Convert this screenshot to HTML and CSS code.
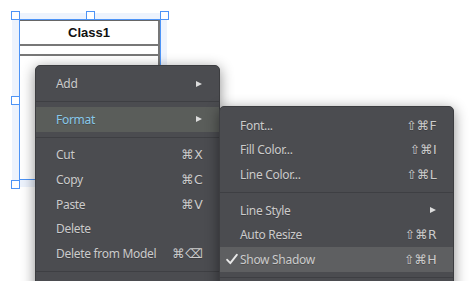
FILE: index.html
```html
<!DOCTYPE html>
<html lang="en">
<head>
    <meta charset="UTF-8">
    <title>Class Diagram - Context Menu</title>
    <link rel="stylesheet" href="styles.css">
</head>
<body>
    <div class="canvas">
        <div class="glow"></div>
        <div class="node">
            <div class="node-title">Class1</div>
            <div class="node-attrs"></div>
            <div class="node-ops"></div>
        </div>
        <div class="selection"></div>
        <span class="handle h-tl"></span>
        <span class="handle h-tc"></span>
        <span class="handle h-tr"></span>
        <span class="handle h-ml"></span>
        <span class="handle h-bl"></span>

        <div class="menu menu-main">
            <div class="item"><span class="mark"></span><span class="label">Add</span><span class="arrow"></span></div>
            <div class="sep"></div>
            <div class="item active"><span class="mark"></span><span class="label">Format</span><span class="arrow"></span></div>
            <div class="sep"></div>
            <div class="item"><span class="mark"></span><span class="label">Cut</span><span class="key">⌘X</span></div>
            <div class="item"><span class="mark"></span><span class="label">Copy</span><span class="key">⌘C</span></div>
            <div class="item"><span class="mark"></span><span class="label">Paste</span><span class="key">⌘V</span></div>
            <div class="item"><span class="mark"></span><span class="label">Delete</span></div>
            <div class="item"><span class="mark"></span><span class="label">Delete from Model</span><span class="key">⌘⌫</span></div>
            <div class="sep"></div>
        </div>

        <div class="menu menu-sub">
            <div class="item"><span class="mark"></span><span class="label">Font...</span><span class="key">⇧⌘F</span></div>
            <div class="item"><span class="mark"></span><span class="label">Fill Color...</span><span class="key">⇧⌘I</span></div>
            <div class="item"><span class="mark"></span><span class="label">Line Color...</span><span class="key">⇧⌘L</span></div>
            <div class="sep"></div>
            <div class="item"><span class="mark"></span><span class="label">Line Style</span><span class="arrow"></span></div>
            <div class="item"><span class="mark"></span><span class="label">Auto Resize</span><span class="key">⇧⌘R</span></div>
            <div class="item checked">
                <span class="mark">
                    <svg width="12" height="12" viewBox="0 0 12 12"><polyline points="1.2,6.8 4.3,10.2 10.8,1.8" fill="none" stroke="#e8e8e8" stroke-width="1.9" stroke-linecap="round" stroke-linejoin="round"/></svg>
                </span>
                <span class="label">Show Shadow</span><span class="key">⇧⌘H</span>
            </div>
            <div class="sep"></div>
        </div>
    </div>
</body>
</html>
```

FILE: styles.css
```css
body {
    margin: 0;
    background: #fff;
    font-family: 'Noto Sans', 'DejaVu Sans', sans-serif;
    overflow: hidden;
}
.canvas {
    position: relative;
    width: 469px;
    height: 281px;
    overflow: hidden;
    background: #fff;
}
.glow {
    position: absolute;
    left: 12px;
    top: 13px;
    width: 155px;
    height: 174px;
    background: rgba(214, 229, 250, 0.45);
}
.node {
    position: absolute;
    left: 20px;
    top: 20px;
    width: 138px;
    height: 158px;
    background: #fff;
    border-top: 1px solid #666;
    border-right: 2px solid #777;
    border-bottom: 1px solid #888;
    display: flex;
    flex-direction: column;
}
.node-title {
    height: 23px;
    display: flex;
    align-items: center;
    justify-content: center;
    font-family: 'Liberation Sans', Arial, sans-serif;
    font-weight: 700;
    font-size: 13px;
    color: #111;
    border-bottom: 2px solid #777;
}
.node-attrs {
    height: 8px;
    border-bottom: 2px solid #777;
}
.node-ops {
    flex: 1;
}
.selection {
    position: absolute;
    left: 19px;
    top: 19px;
    width: 140px;
    height: 159px;
    border: 1px solid #4d94f7;
}
.handle {
    position: absolute;
    width: 7px;
    height: 7px;
    background: #fff;
    border: 1px solid #4d94f7;
}
.h-tl { left: 11px; top: 11px; }
.h-tc { left: 86px; top: 11px; }
.h-tr { left: 160px; top: 11px; }
.h-ml { left: 11px; top: 96px; }
.h-bl { left: 11px; top: 180px; }

.menu {
    position: absolute;
    background: #4b4c50;
    border: 1px solid #3c3d40;
    border-radius: 5px;
    box-shadow: 0 3px 14px rgba(0, 0, 0, 0.45);
    box-sizing: border-box;
    color: #cbcbcb;
    font-size: 12px;
    letter-spacing: -0.3px;
}
.menu-main {
    left: 35px;
    top: 65px;
    width: 185px;
    height: 240px;
    padding-top: 5.5px;
}
.menu-sub {
    left: 219px;
    top: 106px;
    width: 235px;
    height: 200px;
    padding-top: 6px;
}
.item {
    height: 24.6px;
    display: flex;
    align-items: center;
    padding: 0 16px 0 6px;
    text-shadow: 0 1px 0 rgba(0, 0, 0, 0.2);
}
.mark {
    width: 14px;
    flex: none;
    display: flex;
    align-items: center;
}
.label {
    flex: 1;
}
.key {
    font-family: 'DejaVu Sans', sans-serif;
    font-size: 12.5px;
    letter-spacing: 0.3px;
    color: #cbcbcb;
}
.arrow {
    width: 0;
    height: 0;
    border-left: 6px solid #dcdcdc;
    border-top: 3.5px solid transparent;
    border-bottom: 3.5px solid transparent;
    margin-right: 1px;
}
.item.active {
    background: #5a5d5a;
    color: #88c8ea;
}
.item.checked {
    background: #5e5f61;
}
.sep {
    height: 11px;
    display: flex;
    align-items: center;
}
.sep::after {
    content: "";
    flex: 1;
    height: 1px;
    background: #3e3f43;
}
```
